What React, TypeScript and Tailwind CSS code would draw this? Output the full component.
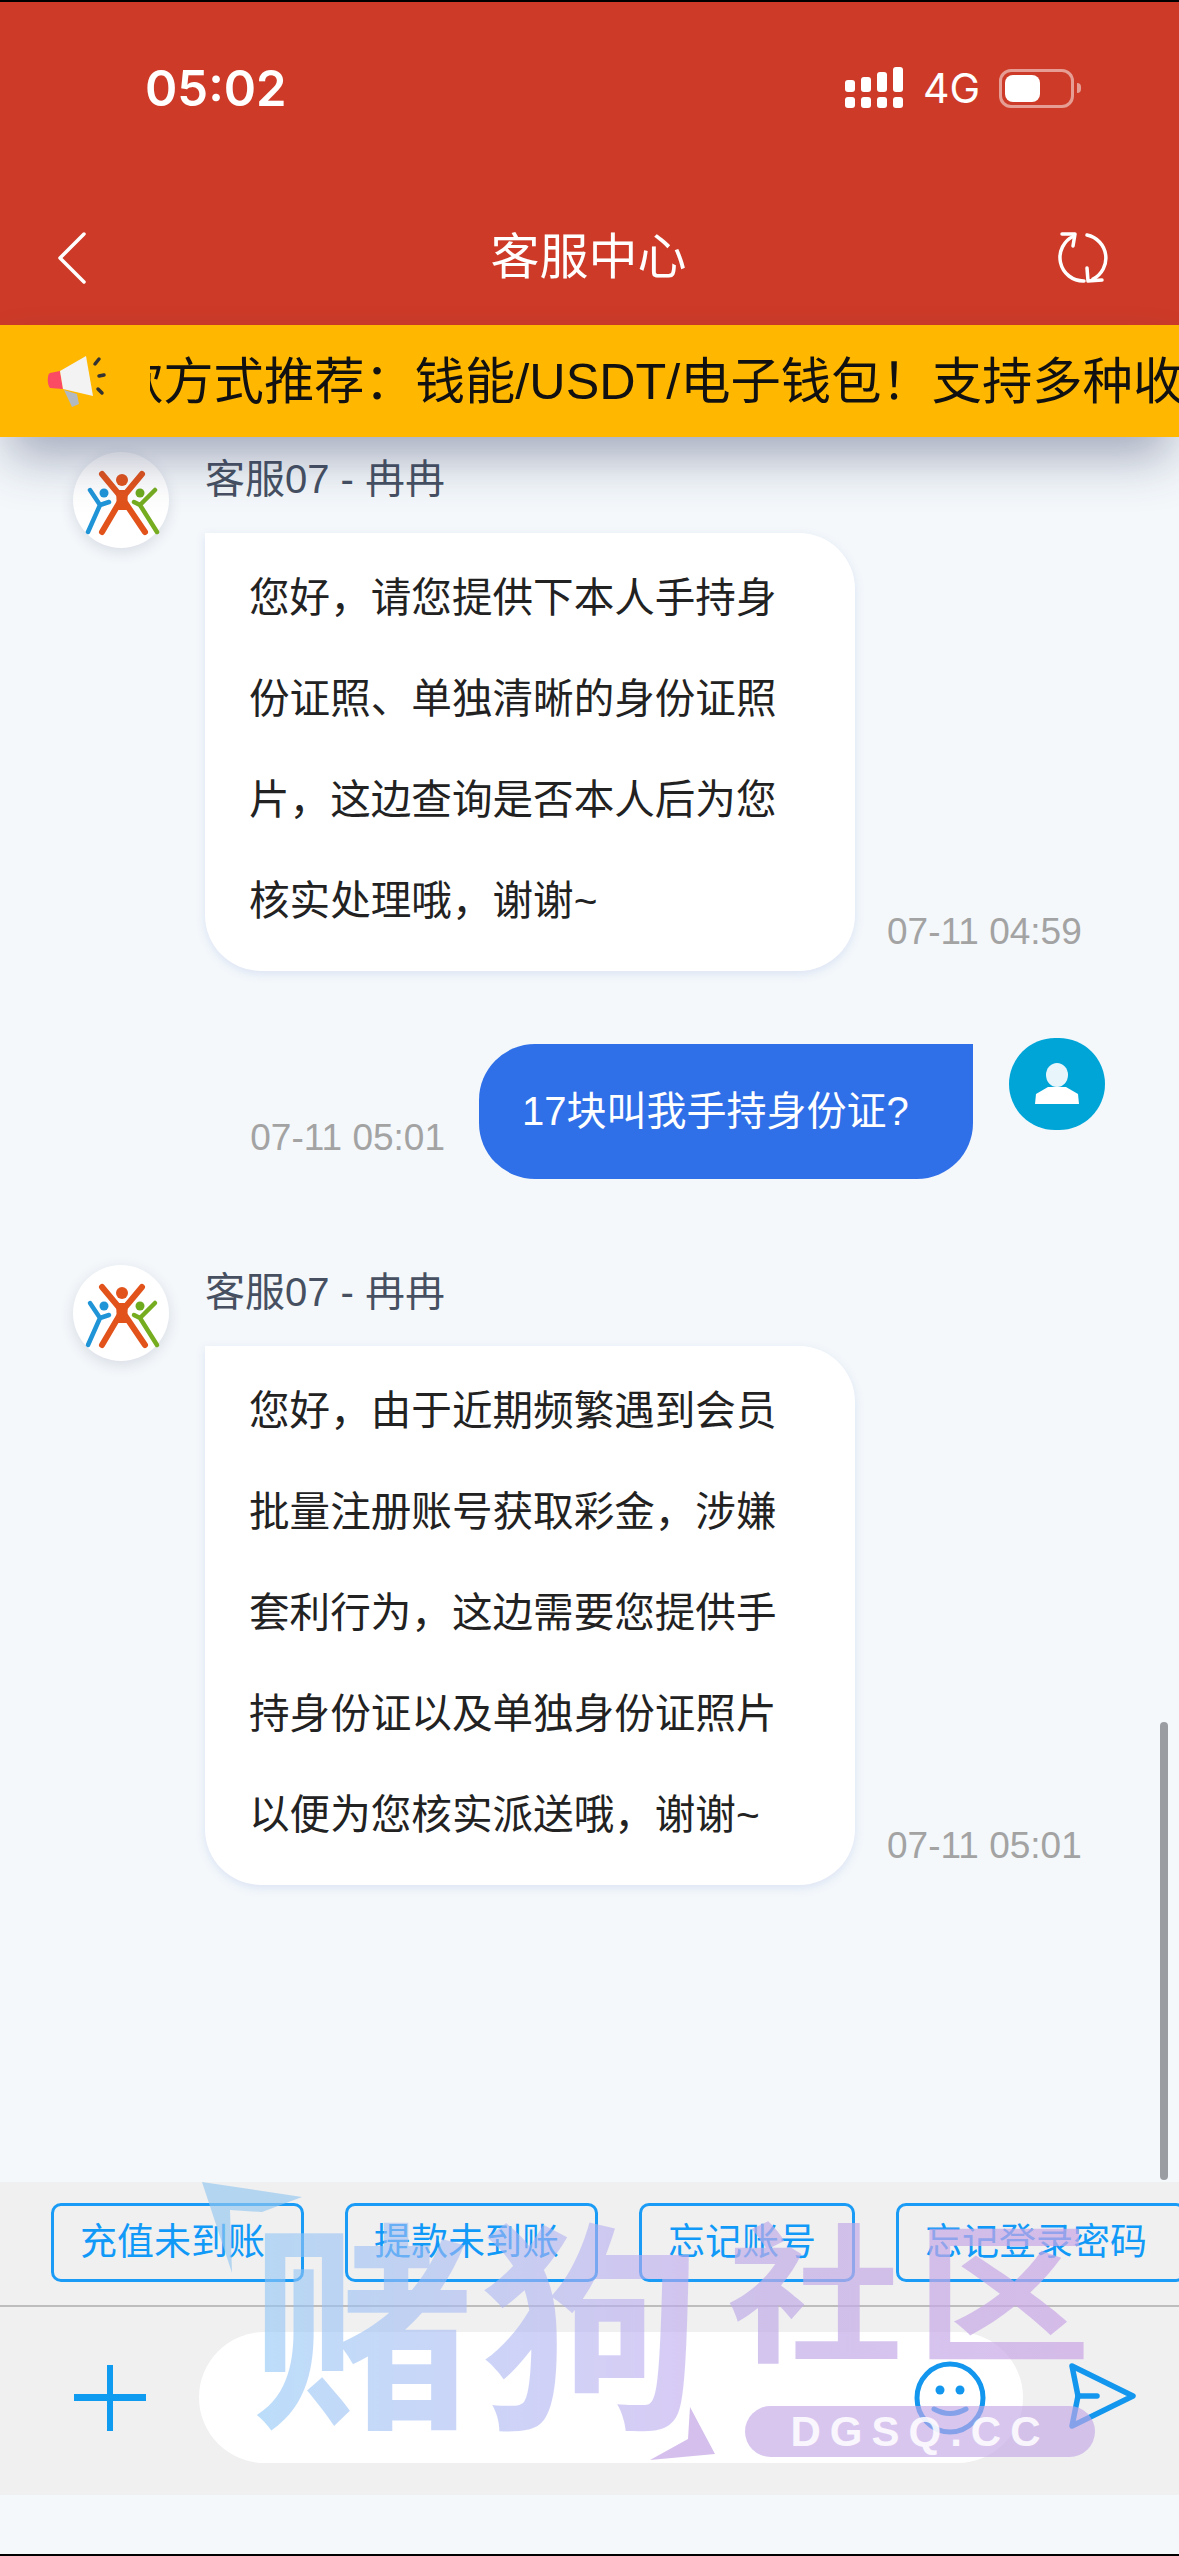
const cjk = "font-['Liberation_Sans','Noto_Sans_CJK_SC',sans-serif]";

function Logo() {
  return (
    <div className="w-[96px] h-[96px] shrink-0 rounded-full bg-white shadow-[0_4px_14px_rgba(60,70,100,0.15)]">
      <svg viewBox="0 0 96 96" className="w-full h-full" fill="none" strokeLinecap="round" strokeLinejoin="round">
        <circle cx="31" cy="41" r="4.5" fill="#1f95d8" />
        <path d="M17 38L27 53L15 80M27 53L36 50" stroke="#1f95d8" strokeWidth="4.5" />
        <circle cx="67" cy="41" r="4.5" fill="#6eaa1e" />
        <path d="M82 38L67 53L84 80M67 53L61 50" stroke="#76ad20" strokeWidth="4.5" />
        <circle cx="49" cy="28" r="6" fill="#e2531c" />
        <path d="M29 22L49 46L72 80M69 22L49 46L29 80" stroke="#e2531c" strokeWidth="6" />
        <path d="M43 38L55 38L54 58L44 58Z" fill="#e2531c" />
      </svg>
    </div>
  );
}

function Agent({ lines, time }: { lines: string[]; time: string }) {
  return (
    <div className="flex gap-[36px] pl-[73px]">
      <Logo />
      <div className="flex flex-col">
        <div className="h-[81px] pt-[2px] text-[40px] leading-[50px] text-[#465061]">客服07 - 冉冉</div>
        <div className="flex items-end gap-[32px]">
          <div className="w-[650px] rounded-r-[56px] rounded-bl-[56px] bg-white pl-[44px] pt-[15px] pb-[19px] text-[40.6px] leading-[101px] text-[#222] shadow-[0_3px_10px_rgba(110,140,210,0.18)]">
            {lines.map((l) => (
              <div key={l} className="whitespace-nowrap">{l}</div>
            ))}
          </div>
          <div className="mb-[17px] text-[37px] leading-[44px] text-[#a3a3a3] whitespace-nowrap">{time}</div>
        </div>
      </div>
    </div>
  );
}

const quick = ["充值未到账", "提款未到账", "忘记账号", "忘记登录密码"];

export default function App() {
  return (
    <div className={`relative flex h-[2556px] w-[1179px] flex-col overflow-hidden border-y-2 border-black bg-[#f4f8fb] ${cjk}`}>
      <header className="flex h-[323px] shrink-0 flex-col bg-[#cd3b28] text-white">
        <div className="flex h-[60px] items-center justify-between pl-[145px] pr-[98px] mt-[56px]">
          <span className="font-['Inter',sans-serif] text-[49px] font-semibold leading-none">05:02</span>
          <div className="flex items-center">
            <svg width="58" height="42" viewBox="0 0 58 42" fill="white">
              <rect x="0" y="13" width="10" height="12" rx="3" />
              <rect x="16" y="10" width="10" height="15" rx="3" />
              <rect x="32" y="5" width="10" height="20" rx="3" />
              <rect x="48" y="0" width="10" height="25" rx="3" />
              <rect x="0" y="30" width="10" height="11" rx="3" />
              <rect x="16" y="30" width="10" height="11" rx="3" />
              <rect x="32" y="30" width="10" height="11" rx="3" />
              <rect x="48" y="30" width="10" height="11" rx="3" />
            </svg>
            <span className="ml-[20px] font-['Inter',sans-serif] text-[41px] leading-none">4G</span>
            <div className="ml-[19px] flex h-[39px] w-[75px] items-center rounded-[12px] border-[3px] border-white/50 pl-[3px]">
              <div className="h-[27px] w-[35px] rounded-[8px] bg-white" />
            </div>
            <div className="ml-[3px] h-[10px] w-[4px] rounded-r-full bg-white/50" />
          </div>
        </div>
        <div className="mt-[107px] grid h-[65px] grid-cols-3 items-center pl-[56px] pr-[70px]">
          <svg width="32" height="54" viewBox="0 0 32 54" fill="none" stroke="white" strokeWidth="3.5" strokeLinecap="round" strokeLinejoin="round">
            <path d="M28 3L4 27L28 51" />
          </svg>
          <div className="whitespace-nowrap pl-[12px] text-center text-[49px] leading-none">客服中心</div>
          <svg className="justify-self-end" width="52" height="52" viewBox="0 0 52 52" fill="none" stroke="white" strokeWidth="3.5" strokeLinecap="round" strokeLinejoin="round">
            <path d="M17 4A23.5 23.5 0 0 0 27 49" />
            <path d="M30 3A23.5 23.5 0 0 1 36 47" />
            <path d="M5 2L18 2L16 14" />
            <path d="M30 36L31 49L45 48" />
          </svg>
        </div>
      </header>

      <div className="relative z-10 flex h-[112px] shrink-0 items-center bg-[#ffb700] pl-[40px] shadow-[0_28px_50px_-8px_rgba(50,60,100,0.42)]">
        <svg width="70" height="60" viewBox="40 350 70 60" className="shrink-0">
          <path d="M64 389L77 393L79 403L72 406Z" fill="#b3b9c0" />
          <path d="M60 370L50 372C47 373 47 384 50 387L63 388Z" fill="#fb4a63" />
          <path d="M60 370L86 355L93 395L63 388Z" fill="#f3f3f3" />
          <path d="M95 363L99 358M99 375L104 374M98 388L102 392" stroke="#333" strokeWidth="3.5" strokeLinecap="round" />
        </svg>
        <div className="ml-[40px] min-w-0 flex-1 overflow-hidden pt-[2px]">
          <div className="-ml-[37px] whitespace-nowrap text-[50.3px] leading-[60px] text-[#111]">款方式推荐：钱能/USDT/电子钱包！支持多种收款方式</div>
        </div>
      </div>

      <main className="relative flex min-h-0 flex-1 flex-col pt-[15px]">
        <Agent
          time="07-11 04:59"
          lines={["您好，请您提供下本人手持身", "份证照、单独清晰的身份证照", "片，这边查询是否本人后为您", "核实处理哦，谢谢~"]}
        />
        <div className="mt-[67px] flex justify-end gap-[36px] pr-[74px]">
          <div className="flex items-end gap-[34px]">
            <div className="mb-[19px] text-[37px] leading-[44px] text-[#a3a3a3] whitespace-nowrap">07-11 05:01</div>
            <div className="mt-[6px] flex h-[135px] w-[494px] items-start rounded-l-[56px] rounded-br-[56px] bg-[#2f6fe8] pl-[43px] pt-[42px] text-[40px] leading-[50px] text-white">
              17块叫我手持身份证?
            </div>
          </div>
          <div className="flex h-[92px] w-[96px] shrink-0 items-center justify-center rounded-full bg-[#00a5d8]">
            <svg width="46" height="42" viewBox="0 0 46 42" fill="white">
              <ellipse cx="23" cy="12" rx="11" ry="12" fill="#e8f6fb" />
              <path d="M14 24L32 24L44 31L45 41L1 41L2 31Z" />
            </svg>
          </div>
        </div>
        <div className="mt-[86px]">
          <Agent
            time="07-11 05:01"
            lines={["您好，由于近期频繁遇到会员", "批量注册账号获取彩金，涉嫌", "套利行为，这边需要您提供手", "持身份证以及单独身份证照片", "以便为您核实派送哦，谢谢~"]}
          />
        </div>
        <div className="absolute right-[11px] top-[1285px] h-[458px] w-[8px] rounded-full bg-[#9a9ea3]" />
      </main>

      <div className="flex h-[123px] shrink-0 gap-[41px] overflow-hidden bg-[#f0f0f0] pl-[51px] pt-[21px]">
        {quick.map((q) => (
          <div key={q} className="flex h-[79px] shrink-0 items-center whitespace-nowrap rounded-[10px] border-[3px] border-[#1a9bf5] pl-[26px] pr-[36px] text-[37px] leading-none text-[#1199f8]">
            {q}
          </div>
        ))}
      </div>
      <div className="h-[2px] shrink-0 bg-[#bdbdbd]" />
      <div className="flex h-[188px] shrink-0 items-start bg-[#f0f0f0] pl-[74px] pt-[25px]">
        <svg width="72" height="66" viewBox="0 0 72 66" className="mt-[33px] shrink-0" fill="#0f9bef">
          <rect x="33" y="0" width="6" height="66" />
          <rect x="0" y="29" width="72" height="7" />
        </svg>
        <div className="ml-[53px] flex h-[131px] w-[824px] shrink-0 items-center justify-end rounded-[66px] bg-white pr-[36px]">
          <svg width="74" height="76" viewBox="0 0 74 76" fill="none" stroke="#1296ee" strokeWidth="5" strokeLinecap="round" className="mt-[1px]">
            <ellipse cx="37" cy="38" rx="33" ry="34" />
            <circle cx="27" cy="30" r="4.5" fill="#1296ee" stroke="none" />
            <circle cx="47" cy="30" r="4.5" fill="#1296ee" stroke="none" />
            <path d="M21 49Q37 58 53 49" />
          </svg>
        </div>
        <svg width="68" height="68" viewBox="0 0 68 68" fill="none" stroke="#1296ee" strokeWidth="5.5" strokeLinejoin="round" strokeLinecap="round" className="ml-[46px] mt-[30px] shrink-0">
          <path d="M3 4L64 34L3 64L9 34Z" />
          <path d="M9 34L28 34" />
        </svg>
      </div>
      <div className="h-[59px] shrink-0 bg-[#f4f8fb]" />

      <div className="pointer-events-none absolute left-0 top-[2150px] h-[330px] w-[1179px] font-['Noto_Sans_CJK_SC',sans-serif]">
        <svg className="absolute left-[200px] top-[28px]" width="110" height="95" viewBox="0 0 110 95" fill="#93c6f0" fillOpacity="0.65">
          <path d="M2 2L102 17L62 32L30 30L32 93Z" />
        </svg>
        <div className="absolute left-[252px] top-[40px] whitespace-nowrap bg-gradient-to-r from-[#8fc8f7] to-[#c0a8ee] bg-clip-text text-[222px] font-bold leading-[1.1] tracking-[6px] text-transparent opacity-60">
          赌狗
        </div>
        <div className="absolute left-[727px] top-[51px] origin-top scale-y-[0.85] whitespace-nowrap bg-gradient-to-r from-[#c0aee8] to-[#cba6e6] bg-clip-text text-[176px] font-bold leading-[1.1] tracking-[12px] text-transparent opacity-70">
          社区
        </div>
        <svg className="absolute left-[645px] top-[255px]" width="75" height="55" viewBox="0 0 75 55" fill="#d0b8ea" fillOpacity="0.9">
          <path d="M45 0L70 47L5 53L43 32Z" />
        </svg>
        <div className="absolute left-[745px] top-[254px] flex h-[51px] w-[350px] items-center justify-center rounded-[26px] bg-[#c3a7e6]/65 font-['Liberation_Sans',sans-serif] text-[42px] font-bold leading-none tracking-[9px] text-white/85">
          DGSQ.CC
        </div>
      </div>
    </div>
  );
}
